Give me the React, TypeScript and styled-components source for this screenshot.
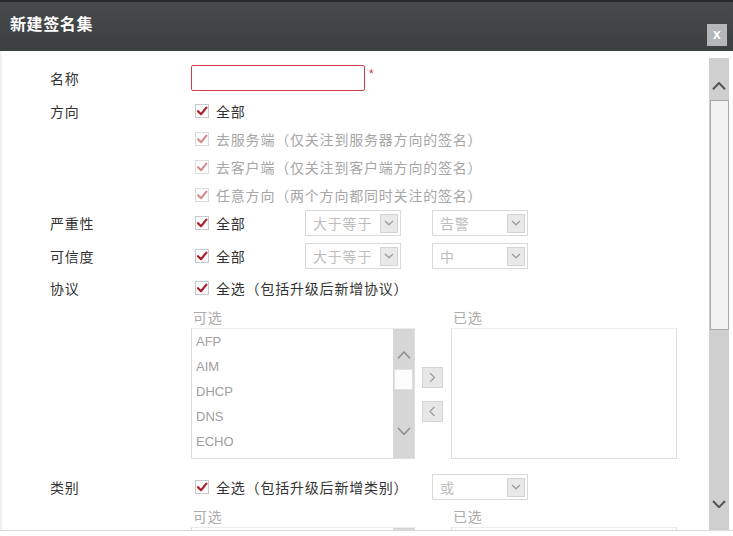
import React from "react";
import styled, { createGlobalStyle } from "styled-components";

const GlobalStyle = createGlobalStyle`
  html, body { margin: 0; padding: 0; background: #fff; }
  body { font-family: "Noto Sans CJK SC", "Liberation Sans", sans-serif; }
  * { box-sizing: border-box; }
`;

const CJK = `"Noto Sans CJK SC", "Liberation Sans", sans-serif`;

const Dialog = styled.div`
  width: 733px;
  height: 536px;
  display: flex;
  flex-direction: column;
  background: #fff;
  overflow: hidden;
`;

const Header = styled.div`
  flex: 0 0 51px;
  border-top: 2px solid #26292a;
  background: linear-gradient(#464a4b, #3d4041);
  display: flex;
  align-items: flex-start;
  justify-content: space-between;
  padding: 0 6px 0 10px;
`;

const Title = styled.div`
  margin-top: 11px;
  line-height: 20px;
  font-size: 16px;
  font-weight: bold;
  letter-spacing: 0.6px;
  color: #fff;
  font-family: ${CJK};
`;

const CloseBtn = styled.div`
  margin-top: 22px;
  width: 20px;
  height: 22px;
  background: #b4b6b7;
  color: #fff;
  font-family: "Liberation Sans", sans-serif;
  font-weight: bold;
  font-size: 14px;
  display: flex;
  align-items: center;
  justify-content: center;
  padding-bottom: 2px;
`;

const Body = styled.div`
  flex: 0 0 480px;
  display: flex;
  overflow: hidden;
  border-bottom: 1px solid #dadada;
  box-shadow: inset 2px 0 0 #eef0f1;
`;

const Form = styled.div`
  flex: 1;
  display: flex;
  flex-direction: column;
  padding-top: 14px;
  min-width: 0;
`;

const Row = styled.div<{ $mt?: number; $h?: number; $align?: string }>`
  display: flex;
  align-items: ${(p) => p.$align || "center"};
  margin-top: ${(p) => p.$mt ?? 0}px;
  ${(p) => (p.$h ? `height: ${p.$h}px;` : "")}
  flex-shrink: 0;
`;

const Label = styled.div<{ $lh?: number }>`
  width: 191px;
  padding-left: 50px;
  font-size: 14px;
  letter-spacing: 0.8px;
  color: #333;
  line-height: ${(p) => p.$lh || 20}px;
  flex-shrink: 0;
`;

const Content = styled.div`
  display: flex;
  flex-direction: column;
`;

const TextInput = styled.input`
  width: 174px;
  height: 26px;
  border: 1px solid #cf3f4c;
  border-radius: 2px;
  outline: none;
  padding: 0 6px;
  font-size: 13px;
`;

const Required = styled.span`
  align-self: flex-start;
  margin: 2px 0 0 4px;
  color: #d4303d;
  font-size: 12px;
  font-family: "Liberation Sans", sans-serif;
`;

const CheckLine = styled.div<{ $w?: number; $h?: number; $disabled?: boolean }>`
  display: flex;
  align-items: center;
  height: ${(p) => p.$h || 28}px;
  ${(p) => (p.$w ? `width: ${p.$w}px;` : "")}
  padding-left: 4px;
  gap: 7px;
  font-size: 14px;
  letter-spacing: 0.8px;
  color: ${(p) => (p.$disabled ? "#a6a6a6" : "#333")};
  white-space: nowrap;
  flex-shrink: 0;
`;

const Box = styled.svg`
  flex-shrink: 0;
  display: block;
`;

function Check({ disabled }: { disabled?: boolean }) {
  return (
    <Box width="14" height="14" viewBox="0 0 14 14">
      <rect x="0.5" y="0.5" width="13" height="13" fill="#fff" stroke={disabled ? "#dcdcdc" : "#c9c9c9"} />
      <path
        d="M3 7.2 L6 10.2 L11.4 3.6"
        fill="none"
        stroke={disabled ? "#d88c90" : "#ad1f2a"}
        strokeWidth="2.2"
        strokeLinecap="round"
        strokeLinejoin="round"
      />
    </Box>
  );
}

const SelectBox = styled.div<{ $gapBefore?: number }>`
  width: 96px;
  height: 26px;
  border: 1px solid #d9d9d9;
  background: #fff;
  display: flex;
  align-items: center;
  justify-content: space-between;
  padding: 0 2px 0 7px;
  margin-left: ${(p) => p.$gapBefore ?? 0}px;
  font-size: 14px;
  letter-spacing: 0.8px;
  color: #bdbdbd;
  flex-shrink: 0;
`;

const SelectArrow = styled.div`
  width: 18px;
  height: 19px;
  background: #e9e9e9;
  border: 1px solid #d3d3d3;
  display: flex;
  align-items: center;
  justify-content: center;
`;

function Chevron({ dir, color, w = 10, sw = 1.6 }: { dir: "up" | "down" | "left" | "right"; color: string; w?: number; sw?: number }) {
  const h = w * 0.6;
  let pts = "";
  if (dir === "down") pts = `1,1 ${w / 2 + 1},${h} ${w + 1},1`;
  if (dir === "up") pts = `1,${h} ${w / 2 + 1},1 ${w + 1},${h}`;
  if (dir === "right") pts = `1,1 ${h},${w / 2 + 1} 1,${w + 1}`;
  if (dir === "left") pts = `${h},1 1,${w / 2 + 1} ${h},${w + 1}`;
  const vertical = dir === "up" || dir === "down";
  return (
    <svg width={vertical ? w + 2 : h + 1} height={vertical ? h + 1 : w + 2} style={{ display: "block" }}>
      <polyline points={pts} fill="none" stroke={color} strokeWidth={sw} strokeLinejoin="round" />
    </svg>
  );
}

function Select({ value, gap }: { value: string; gap?: number }) {
  return (
    <SelectBox $gapBefore={gap}>
      <span>{value}</span>
      <SelectArrow>
        <Chevron dir="down" color="#9a9a9a" w={8} sw={1.3} />
      </SelectArrow>
    </SelectBox>
  );
}

const Transfer = styled.div<{ $capH: number }>`
  display: grid;
  grid-template-columns: 224px 36px 226px;
  grid-template-rows: ${(p) => p.$capH}px 131px;
  margin-left: 191px;
  flex-shrink: 0;
`;

const Caption = styled.div<{ $col: number }>`
  grid-column: ${(p) => p.$col};
  align-self: end;
  line-height: 20px;
  padding-left: 2px;
  margin-bottom: 1px;
  font-size: 14px;
  letter-spacing: 0.8px;
  color: #acacac;
`;

const ListBox = styled.div`
  border: 1px solid #dedede;
  border-top-color: #ececec;
  display: flex;
  overflow: hidden;
`;

const Items = styled.div`
  flex: 1;
  display: flex;
  flex-direction: column;
`;

const Item = styled.div`
  height: 25px;
  line-height: 25px;
  padding-left: 4px;
  font-family: "Liberation Sans", sans-serif;
  font-size: 13px;
  color: #a0a0a0;
`;

const ListScroll = styled.div`
  width: 21px;
  background: #d6d6d6;
  display: flex;
  flex-direction: column;
  align-items: center;
`;

const ListArrow = styled.div<{ $mt?: number; $mb?: number }>`
  height: 20px;
  display: flex;
  align-items: center;
  justify-content: center;
  margin-top: ${(p) => p.$mt ?? 0}px;
  margin-bottom: ${(p) => p.$mb ?? 0}px;
`;

const ListThumb = styled.div`
  width: 19px;
  height: 21px;
  margin-top: 4px;
  background: #fcfcfc;
  border: 1px solid #e0e0e0;
`;

const Spacer = styled.div`
  flex: 1;
`;

const MoveCol = styled.div`
  display: flex;
  flex-direction: column;
  align-items: center;
  padding-top: 39px;
  gap: 13px;
  padding-right: 1px;
`;

const MoveBtn = styled.div`
  width: 21px;
  height: 21px;
  background: #e7e7e7;
  border: 1px solid #d4d4d4;
  display: flex;
  align-items: center;
  justify-content: center;
`;

const MainScroll = styled.div`
  width: 20px;
  margin: 7px 4px 0 0;
  height: 472px;
  background: #cfcfcf;
  display: flex;
  flex-direction: column;
  flex-shrink: 0;
`;

const MainArrow = styled.div<{ $h: number; $pt: number }>`
  height: ${(p) => p.$h}px;
  padding-top: ${(p) => p.$pt}px;
  display: flex;
  justify-content: center;
  align-items: flex-start;
  flex-shrink: 0;
`;

const MainThumb = styled.div`
  height: 230px;
  background: #f2f2f2;
  border: 1px solid #a9a9a9;
  margin-left: 1px;
  flex-shrink: 0;
`;

const Footer = styled.div`
  flex: 1;
  background: #fff;
`;

function TransferList({ capH, items }: { capH: number; items: string[] }) {
  return (
    <Transfer $capH={capH}>
      <Caption $col={1}>可选</Caption>
      <Caption $col={3}>已选</Caption>
      <ListBox>
        <Items>
          {items.map((i) => (
            <Item key={i}>{i}</Item>
          ))}
        </Items>
        <ListScroll>
          <ListArrow $mt={16}>
            <Chevron dir="up" color="#8f8f8f" w={12} sw={1.6} />
          </ListArrow>
          <ListThumb />
          <Spacer />
          <ListArrow $mb={17}>
            <Chevron dir="down" color="#8f8f8f" w={12} sw={1.6} />
          </ListArrow>
        </ListScroll>
      </ListBox>
      <MoveCol>
        <MoveBtn>
          <Chevron dir="right" color="#a3a3a3" w={9} sw={1.4} />
        </MoveBtn>
        <MoveBtn>
          <Chevron dir="left" color="#a3a3a3" w={9} sw={1.4} />
        </MoveBtn>
      </MoveCol>
      <ListBox />
    </Transfer>
  );
}

export default function App() {
  return (
    <>
      <GlobalStyle />
      <Dialog>
        <Header>
          <Title>新建签名集</Title>
          <CloseBtn>x</CloseBtn>
        </Header>
        <Body>
          <Form>
            <Row $h={26}>
              <Label>名称</Label>
              <TextInput />
              <Required>*</Required>
            </Row>
            <Row $mt={6} $align="flex-start">
              <Label $lh={28}>方向</Label>
              <Content>
                <CheckLine>
                  <Check />
                  全部
                </CheckLine>
                <CheckLine $disabled>
                  <Check disabled />
                  去服务端（仅关注到服务器方向的签名）
                </CheckLine>
                <CheckLine $disabled>
                  <Check disabled />
                  去客户端（仅关注到客户端方向的签名）
                </CheckLine>
                <CheckLine $disabled>
                  <Check disabled />
                  任意方向（两个方向都同时关注的签名）
                </CheckLine>
              </Content>
            </Row>
            <Row $mt={1} $h={26}>
              <Label>严重性</Label>
              <CheckLine $w={114} $h={26}>
                <Check />
                全部
              </CheckLine>
              <Select value="大于等于" />
              <Select value="告警" gap={31} />
            </Row>
            <Row $mt={7} $h={26}>
              <Label>可信度</Label>
              <CheckLine $w={114} $h={26}>
                <Check />
                全部
              </CheckLine>
              <Select value="大于等于" />
              <Select value="中" gap={31} />
            </Row>
            <Row $mt={5} $h={28}>
              <Label>协议</Label>
              <CheckLine>
                <Check />
                全选（包括升级后新增协议）
              </CheckLine>
            </Row>
            <TransferList capH={26} items={["AFP", "AIM", "DHCP", "DNS", "ECHO"]} />
            <Row $mt={15} $h={26}>
              <Label>类别</Label>
              <CheckLine $w={241} $h={26}>
                <Check />
                全选（包括升级后新增类别）
              </CheckLine>
              <Select value="或" />
            </Row>
            <TransferList capH={27} items={[]} />
          </Form>
          <MainScroll>
            <MainArrow $h={42} $pt={24}>
              <Chevron dir="up" color="#555" w={12} sw={2} />
            </MainArrow>
            <MainThumb />
            <Spacer />
            <MainArrow $h={54} $pt={24}>
              <Chevron dir="down" color="#555" w={12} sw={2} />
            </MainArrow>
          </MainScroll>
        </Body>
        <Footer />
      </Dialog>
    </>
  );
}
